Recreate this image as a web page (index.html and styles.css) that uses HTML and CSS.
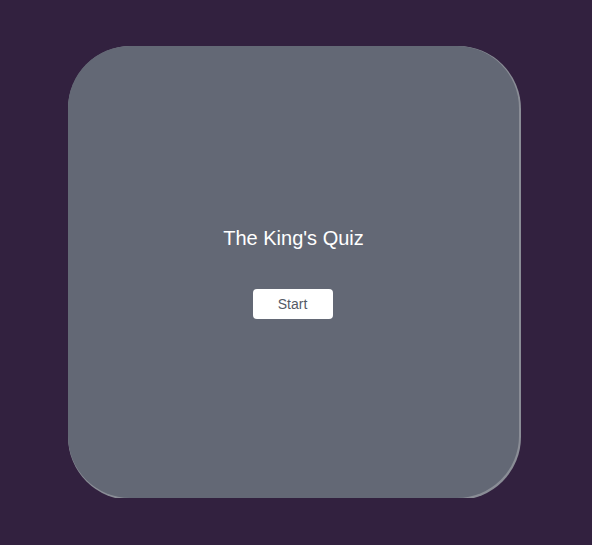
FILE: index.html
```html
<!DOCTYPE html>
<html>
<head>
<meta charset="utf-8">
<link rel="stylesheet" href="styles.css">
</head>
<body>
<div class="page">
  <div class="card">
    <h1 class="title">The King's Quiz</h1>
    <button class="start">Start</button>
  </div>
</div>
</body>
</html>
```
FILE: styles.css
```css
html, body {
  margin: 0;
  padding: 0;
  background: #32213f;
  font-family: "Liberation Sans", Arial, sans-serif;
}
.page {
  padding-top: 46px;
  padding-left: 68px;
}
.card {
  box-sizing: border-box;
  width: 451px;
  height: 452px;
  background: #636875;
  border-radius: 62px;
  box-shadow: 1px 1px 0 1px #8a8d96;
  display: flex;
  flex-direction: column;
  align-items: center;
  justify-content: center;
  padding-top: 0;
}
.title {
  margin: 0 0 39px 0;
  font-size: 20px;
  font-weight: normal;
  color: #ffffff;
  line-height: 24px;
}
.start {
  width: 80px;
  height: 30px;
  border: none;
  border-radius: 4px;
  background: #ffffff;
  color: #555a66;
  font-family: "Liberation Sans", Arial, sans-serif;
  font-size: 14px;
  padding: 0;
  margin: 0 2px 0 0;
}
```
